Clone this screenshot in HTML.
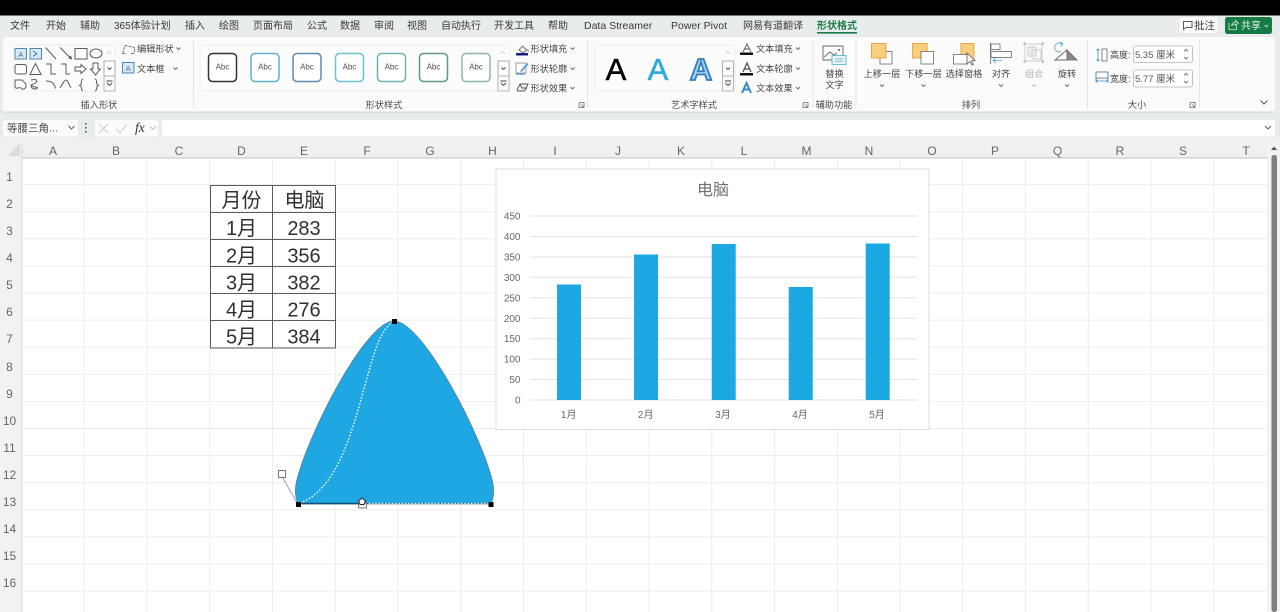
<!DOCTYPE html>
<html lang="zh-CN"><head><meta charset="utf-8"><title>Excel</title>
<style>
html,body{margin:0;padding:0;width:1280px;height:612px;overflow:hidden;background:#fff}
svg{display:block;filter:blur(.35px)}
text{font-family:"Liberation Sans","Noto Sans CJK SC",sans-serif}
.t{font-size:10px;fill:#3a3a3a}
.r{font-size:9.2px;fill:#444}
.c{text-anchor:middle}
.g{font-size:9.2px;fill:#4a4a4a;text-anchor:middle}
.h{font-size:12px;fill:#666;text-anchor:middle}
.n{font-size:12px;fill:#666;text-anchor:middle}
.s{fill:none;stroke:#5a5a5a;stroke-width:1}
.ab{font-size:8px;fill:#5a4a50;text-anchor:middle}
.ax{font-size:10px;fill:#666;text-anchor:end}
.m{font-size:10px;fill:#666;text-anchor:middle}
.tb{font-size:20px;fill:#303030;text-anchor:middle}
.box{fill:#fff;stroke-width:1.5}
.ch{fill:none;stroke:#666;stroke-width:.9}
</style></head><body>
<svg width="1280" height="612" viewBox="0 0 1280 612" xmlns="http://www.w3.org/2000/svg">
<defs>
<pattern id="grid" x="22" y="158" width="62.75" height="27.1" patternUnits="userSpaceOnUse">
<path d="M62.25 0V27.1M0 26.6H62.75" fill="none" stroke="#ededed" stroke-width="1"/>
</pattern>
</defs>
<rect width="1280" height="612" fill="#fff"/>
<rect x="0" y="15" width="1280" height="123" fill="#e9ecec"/>

<!-- tabs -->
<g class="t">
<text x="10" y="29" class="t">文件</text><text x="46" y="29" class="t">开始</text><text x="80" y="29" class="t">辅助</text>
<text x="114" y="29" class="t">365体验计划</text><text x="185" y="29" class="t">插入</text><text x="219" y="29" class="t">绘图</text>
<text x="253" y="29" class="t">页面布局</text><text x="307" y="29" class="t">公式</text><text x="340" y="29" class="t">数据</text>
<text x="374" y="29" class="t">审阅</text><text x="407" y="29" class="t">视图</text><text x="441" y="29" class="t">自动执行</text>
<text x="494" y="29" class="t">开发工具</text><text x="548" y="29" class="t">帮助</text>
<text x="584" y="29" class="t" style="font-size:10.5px">Data Streamer</text><text x="671" y="29" class="t" style="font-size:10.5px">Power Pivot</text>
<text x="743" y="29" class="t">网易有道翻译</text>
<text x="817" y="29" class="t" style="fill:#1a7a45;font-weight:700">形状格式</text>
</g>
<rect x="817" y="32" width="40" height="1.6" fill="#1a7a45"/>

<!-- comment/share -->
<rect x="1179" y="17" width="39" height="16.500" rx="2.500" fill="#fbfbfb" stroke="#dcdcdc" stroke-width=".6"/>
<path d="M1183.500 21.500h8.500v6h-6l-2.500 2z" class="s"/>
<text x="1194" y="29" style="font-size:10.500px;fill:#3a3a3a">批注</text>
<rect x="1225" y="17" width="47" height="17" rx="2.500" fill="#157a43"/>
<path d="M1229 23v6.500h7.500v-3.500M1231.500 26c.5-3 2.500-4 4.500-4l-.5-1.500 3 2.500-3 2.500.3-1.500c-1.500 0-3 .5-3.800 2" fill="none" stroke="#cfe8da" stroke-width=".8"/>
<text x="1241" y="29" style="font-size:10px;fill:#e8f5ee">共享</text>
<path d="M1264.500 25l1.800 1.800 1.800-1.800" fill="none" stroke="#e8f5ee" stroke-width=".8"/>

<!-- ribbon -->
<rect x="3" y="37" width="1272" height="75" rx="4" fill="#fbfbfb"/>
<rect x="3" y="111.500" width="1272" height="1.500" fill="#dcdede"/>
<g fill="#e4e6e6">
<rect x="193" y="40" width="1" height="68"/><rect x="587" y="40" width="1" height="68"/><rect x="812.500" y="40" width="1" height="68"/><rect x="855.500" y="40" width="1" height="68"/><rect x="1087" y="40" width="1" height="68"/><rect x="1199" y="40" width="1" height="68"/>
</g>

<!-- shapes gallery -->
<rect x="13" y="45" width="102" height="46" rx="3" fill="#fcfcfc" stroke="#eeeeee"/>
<g class="s">
<rect x="15" y="48.500" width="11.500" height="10.500" fill="#dbe9f5" stroke="#4c86b5"/>
<rect x="30" y="48.500" width="11.500" height="10.500" fill="#dbe9f5" stroke="#4c86b5"/>
<path d="M45.500 47.500l10.500 11.500M60 47.500l11 11"/>
<path d="M69 58l2.500.8-.8-2.500z" fill="#666"/>
<rect x="75" y="48.500" width="12" height="10.500"/>
<ellipse cx="96" cy="53.500" rx="6" ry="4.500"/>
<rect x="15" y="64.500" width="11.500" height="9.500" rx="2"/>
<path d="M30 74.500l5.500-11 5.500 11z"/>
<path d="M46 64h5v10h5M61 64h5v10h4"/>
<path d="M75 67h6v-2.500l5 4.500-5 4.500v-2.500h-6z"/>
<path d="M93 63h5v6h2.500l-5 6-5-6h2.500z"/>
<path d="M15 80h7l4 4v3c-2 3-4 2.500-5 1s-6 2.500-6-2z"/>
<path d="M31 80c4-1 8-.5 4.500 3-3 2-6 1.500-3.500 3s7 1 5 2.500-8-1-5-3.500"/>
<path d="M46 81c4 0 8 1 9.500 7.500"/>
<path d="M60 88c2-3 4-8 6-8s3 5 5 8"/>
<path d="M83 79c-2 0-1.500 4-2 5.500l-1.500 1 1.500 1c.5.500 0 4.500 2 4.500M95 79c2 0 1.500 4 2 5.500l1.500 1-1.500 1c-.5.500 0 4.500-2 4.500"/>
</g>
<text x="20.700" y="56.800" style="font-size:7.500px;fill:#3c6f9a;text-anchor:middle">A</text>
<path d="M33 51l4 2.700-4 2.700" fill="none" stroke="#3c6f9a" stroke-width=".9"/>
<g>
<path d="M106.500 54l2.500-2.500 2.500 2.500" fill="none" stroke="#ccc" stroke-width=".8"/>
<rect x="104" y="61" width="11" height="15" fill="#fff" stroke="#999" stroke-width=".8"/>
<path d="M107.500 67.500l2 2 2-2" fill="none" stroke="#444" stroke-width=".9"/>
<rect x="104" y="76" width="11" height="15" fill="#fafafa" stroke="#aaa" stroke-width=".8"/>
<path d="M106.500 81h6M107 83l2.500 2.500 2.500-2.500" fill="none" stroke="#444" stroke-width=".9"/>
</g>
<path d="M122.500 53.500l2.500-8 8 1.500 2 1.500-1 5M122.500 53.500h3M131 53.500h3" fill="none" stroke="#4d7c9e" stroke-width="1" stroke-dasharray="3 1"/>
<text x="137" y="52" class="r">编辑形状</text>
<path d="M176.500 47.500l2 2 2-2" class="ch"/>
<rect x="122.500" y="62.500" width="11.500" height="10.500" fill="#dbe9f5" stroke="#4c86b5" stroke-width="1"/>
<text x="128.200" y="71" style="font-size:7.500px;fill:#3c6f9a;text-anchor:middle">A</text>
<text x="137" y="72" class="r">文本框</text>
<path d="M173.500 67.500l2 2 2-2" class="ch"/>
<text x="99" y="108" class="g">插入形状</text>

<!-- shape styles -->
<rect x="200" y="45" width="310" height="46" rx="3" fill="#fcfcfc" stroke="#eeeeee"/>
<rect x="208.500" y="53.500" width="28" height="28" rx="4" class="box" stroke="#333"/>
<rect x="251" y="53.500" width="28" height="28" rx="4" class="box" stroke="#62afc6"/>
<rect x="293" y="53.500" width="28" height="28" rx="4" class="box" stroke="#5f8bb0"/>
<rect x="335.500" y="53.500" width="28" height="28" rx="4" class="box" stroke="#6cc1d2"/>
<rect x="377.500" y="53.500" width="28" height="28" rx="4" class="box" stroke="#71b5b0"/>
<rect x="419.500" y="53.500" width="28" height="28" rx="4" class="box" stroke="#5f9a7f"/>
<rect x="462" y="53.500" width="28" height="28" rx="4" class="box" stroke="#8ab8ae"/>
<text x="222.500" y="69.500" class="ab">Abc</text><text x="265" y="69.500" class="ab">Abc</text><text x="307" y="69.500" class="ab">Abc</text>
<text x="349.500" y="69.500" class="ab">Abc</text><text x="391.500" y="69.500" class="ab">Abc</text><text x="433.500" y="69.500" class="ab">Abc</text><text x="476" y="69.500" class="ab">Abc</text>
<path d="M500.500 54l2.500-2.500 2.500 2.500" fill="none" stroke="#ccc" stroke-width=".8"/>
<rect x="498" y="61" width="11" height="15" fill="#fff" stroke="#999" stroke-width=".8"/>
<path d="M501.500 67.500l2 2 2-2" fill="none" stroke="#444" stroke-width=".9"/>
<rect x="498" y="76" width="11" height="15" fill="#fafafa" stroke="#aaa" stroke-width=".8"/>
<path d="M500.500 81h6M501 83l2.500 2.500 2.500-2.500" fill="none" stroke="#444" stroke-width=".9"/>
<!-- fill/outline/effect -->
<path d="M519 50l3.500-4 4 4-3.500 3zM528 49v3" fill="none" stroke="#666" stroke-width=".9"/>
<rect x="516" y="53" width="12" height="2.500" fill="#1c1c8a"/>
<text x="530.500" y="52" class="r">形状填充</text><path d="M570.500 47.500l2 2 2-2" class="ch"/>
<rect x="516" y="63" width="10" height="10" fill="#fff" stroke="#888" stroke-width=".8"/>
<path d="M520 71l7-8 1.500 1.500-7 7.500z" fill="#5a9fd0"/>
<rect x="516" y="73.500" width="9" height="1.300" fill="#5a9fd0"/>
<text x="530.500" y="72" class="r">形状轮廓</text><path d="M570.500 67.500l2 2 2-2" class="ch"/>
<path d="M517 90l3-6h8l-2 5-2 2h-6zM520 84l2 4h4" fill="#eee" stroke="#555" stroke-width=".9"/>
<text x="530.500" y="91.500" class="r">形状效果</text><path d="M570.500 87l2 2 2-2" class="ch"/>
<text x="384" y="108" class="g">形状样式</text>
<path d="M579 102.500h5v5M579 102.500v5h5M581 104.500l3 3" fill="none" stroke="#666" stroke-width=".8"/>

<!-- wordart -->
<rect x="595" y="45" width="140" height="46" rx="3" fill="#fcfcfc" stroke="#eeeeee"/>
<text x="616" y="80" text-anchor="middle" style="font-size:31px;fill:#000;stroke:#000;stroke-width:.5px">A</text>
<text x="658" y="80" text-anchor="middle" style="font-size:31px;fill:#2ea9d8;stroke:#2ea9d8;stroke-width:.5px">A</text>
<text x="701" y="80" text-anchor="middle" style="font-size:31px;fill:#a8d0ea;stroke:#2f7fc0;stroke-width:1.800px;font-weight:700">A</text>
<path d="M725 54l2.500-2.500 2.500 2.500" fill="none" stroke="#ccc" stroke-width=".8"/>
<rect x="722.500" y="61" width="11" height="15" fill="#fff" stroke="#999" stroke-width=".8"/>
<path d="M726 67.500l2 2 2-2" fill="none" stroke="#444" stroke-width=".9"/>
<rect x="722.500" y="76" width="11" height="15" fill="#fafafa" stroke="#aaa" stroke-width=".8"/>
<path d="M725 81h6M725.500 83l2.500 2.500 2.500-2.500" fill="none" stroke="#444" stroke-width=".9"/>
<path d="M743 52l4-8 4 8M744.500 49h5" fill="none" stroke="#555" stroke-width=".9"/>
<rect x="740" y="52.500" width="13" height="2.500" fill="#111"/>
<text x="756" y="52" class="r">文本填充</text><path d="M796 47.500l2 2 2-2" class="ch"/>
<path d="M743 72l4-9 4 9M744.500 69h5" fill="none" stroke="#555" stroke-width="1.300"/>
<rect x="740" y="73" width="13" height="2.500" fill="#111"/>
<text x="756" y="72" class="r">文本轮廓</text><path d="M796 67.500l2 2 2-2" class="ch"/>
<path d="M742 93l4.500-10 4.500 10M743.800 89.500h5.500" fill="none" stroke="#3a88c4" stroke-width="2"/>
<text x="756" y="91.500" class="r">文本效果</text><path d="M796 87l2 2 2-2" class="ch"/>
<text x="694" y="108" class="g">艺术字样式</text>
<path d="M803 102.500h5v5M803 102.500v5h5M805 104.500l3 3" fill="none" stroke="#666" stroke-width=".8"/>

<!-- alt text -->
<path d="M843 57V46h-20v14h11" fill="none" stroke="#666" stroke-width=".9"/>
<path d="M824 57l6-5 4 3 3-2" fill="none" stroke="#666" stroke-width=".9"/>
<circle cx="839" cy="50" r="1" fill="#555"/>
<rect x="832" y="55.500" width="14" height="9" fill="#e8f5f8" stroke="#5fb3c8" stroke-width=".9"/>
<path d="M835 59h8M835 61.500h8" stroke="#5fb3c8" stroke-width=".7"/>
<text x="834.500" y="77" class="r c">替换</text><text x="834.500" y="88" class="r c">文字</text>
<text x="834" y="108" class="g">辅助功能</text>

<!-- arrange -->
<rect x="880" y="51.500" width="12" height="12.500" fill="#fff" stroke="#777" stroke-width=".9"/>
<rect x="871.500" y="43.500" width="14.500" height="14.500" fill="#fbcf7e" stroke="#e0a040" stroke-width=".9"/>
<text x="882" y="77" class="r c">上移一层</text><path d="M880 84.500l2 2 2-2" class="ch"/>
<rect x="912.500" y="43.500" width="14.500" height="14.500" fill="#fbcf7e" stroke="#e0a040" stroke-width=".9"/>
<rect x="921" y="51.500" width="12.500" height="12.500" fill="#fff" stroke="#777" stroke-width=".9"/>
<text x="923.500" y="77" class="r c">下移一层</text><path d="M921.500 84.500l2 2 2-2" class="ch"/>
<rect x="961" y="43.500" width="13" height="16" fill="#fbcf7e" stroke="#e0a040" stroke-width=".9"/>
<rect x="953.500" y="54.500" width="14" height="9.500" fill="#fff" stroke="#777" stroke-width=".9"/>
<path d="M967 53l8 7.500-3.500.3 2 3.500-1.500.7-2-3.500-3 2.500z" fill="#fff" stroke="#555" stroke-width=".8"/>
<text x="964" y="77" class="r c">选择窗格</text>
<path d="M990.500 43v21" stroke="#777" stroke-width=".9"/>
<rect x="991" y="44" width="9" height="5.500" fill="#fff" stroke="#666" stroke-width=".8"/>
<rect x="991" y="51.500" width="20.500" height="6" fill="#fff" stroke="#666" stroke-width=".8"/>
<path d="M1002 60.500h-9m3-2.500l-3 2.500 3 2.500" fill="none" stroke="#5b9fd0" stroke-width=".8"/>
<text x="1001" y="77" class="r c">对齐</text><path d="M999 84.500l2 2 2-2" class="ch"/>
<g fill="none" stroke="#c8c8c8" stroke-width=".9"><rect x="1025" y="44" width="17" height="17"/><rect x="1028" y="47" width="8" height="9" fill="#eee"/><rect x="1032" y="50" width="9" height="9"/></g>
<g fill="#aaa"><rect x="1023.500" y="42.500" width="2" height="2"/><rect x="1042" y="42.500" width="2" height="2"/><rect x="1023.500" y="60.500" width="2" height="2"/><rect x="1042" y="60.500" width="2" height="2"/></g>
<text x="1034" y="77" class="r c" style="fill:#b4b4b4">组合</text><path d="M1032 84.500l2 2 2-2" fill="none" stroke="#bbb" stroke-width=".9"/>
<path d="M1055 60l12-10v10z" fill="#fff" stroke="#666" stroke-width=".9"/>
<path d="M1067 50l10 10h-10z" fill="#8a8a8a" stroke="#666" stroke-width=".8"/>
<path d="M1062 44a4.500 4.500 0 1 0-1 7.500M1060 42l3 2-2.500 2.500" fill="none" stroke="#5fa9cf" stroke-width=".9"/>
<text x="1067" y="77" class="r c">旋转</text><path d="M1065 84.500l2 2 2-2" class="ch"/>
<text x="971" y="108" class="g">排列</text>

<!-- size -->
<path d="M1098 49v12M1096.500 50.500l1.500-1.500 1.500 1.500M1096.500 59.500l1.500 1.500 1.500-1.500" fill="none" stroke="#3c8fc4" stroke-width=".8"/>
<rect x="1102" y="49" width="5" height="12" fill="#fff" stroke="#666" stroke-width=".8"/>
<text x="1110" y="58" style="font-size:9px;fill:#444">高度:</text>
<rect x="1133.500" y="46" width="59" height="16.500" rx="2" fill="#fff" stroke="#b5b5b5" stroke-width=".8"/>
<text x="1135" y="58" style="font-size:9.500px;fill:#555">5.35 厘米</text>
<path d="M1184 51.500l2-2 2 2M1184 57l2 2 2-2" fill="none" stroke="#555" stroke-width=".8"/>
<rect x="1096" y="72" width="12" height="6" fill="#fff" stroke="#666" stroke-width=".8"/>
<path d="M1096 72v10M1108 72v10M1096 81h12M1097.500 79.500l-1.500 1.500 1.500 1.500M1106.500 79.500l1.500 1.500-1.500 1.500" fill="none" stroke="#3c8fc4" stroke-width=".7"/>
<text x="1110" y="82" style="font-size:9px;fill:#444">宽度:</text>
<rect x="1133.500" y="70" width="59" height="17" rx="2" fill="#fff" stroke="#b5b5b5" stroke-width=".8"/>
<text x="1135" y="82" style="font-size:9.500px;fill:#555">5.77 厘米</text>
<path d="M1184 75.500l2-2 2 2M1184 81l2 2 2-2" fill="none" stroke="#555" stroke-width=".8"/>
<text x="1137" y="108" class="g">大小</text>
<path d="M1190 102.500h5v5M1190 102.500v5h5M1192 104.500l3 3" fill="none" stroke="#666" stroke-width=".8"/>
<path d="M1260.500 100.500l3.500 3.500 3.500-3.500" fill="none" stroke="#555" stroke-width="1"/>

<!-- formula bar -->
<rect x="3" y="120" width="75" height="16.500" rx="2" fill="#fbfbfb"/>
<text x="7" y="131.500" style="font-size:10.500px;fill:#444">等腰三角...</text>
<path d="M68.500 126l3 3 3-3" fill="none" stroke="#555" stroke-width=".9"/>
<g fill="#555"><rect x="85" y="123" width="1.600" height="1.600"/><rect x="85" y="127" width="1.600" height="1.600"/><rect x="85" y="131" width="1.600" height="1.600"/></g>
<rect x="95" y="120" width="63" height="16.500" rx="2" fill="#fbfbfb"/>
<path d="M99 124l9 9M108 124l-9 9M116 129l4 4 7-9" fill="none" stroke="#c9c9c9" stroke-width=".9"/>
<text x="135" y="132" style="font-family:'Liberation Serif',serif;font-style:italic;font-size:13.500px;fill:#333">fx</text>
<path d="M150 126.500l3 3 3-3" fill="none" stroke="#bbb" stroke-width=".9"/>
<rect x="162" y="120" width="1113" height="16.500" rx="2" fill="#fff"/>
<path d="M1265 126l3 3 3-3" fill="none" stroke="#555" stroke-width=".9"/>

<!-- headers -->
<rect x="0" y="138" width="1280" height="20" fill="#eff0f0"/>
<rect x="0" y="158" width="22" height="454" fill="#f1f2f2"/>
<rect x="22" y="157.500" width="1245" height="1" fill="#c4c4c4"/>
<rect x="21.500" y="144" width="1" height="468" fill="#dadada"/>
<path d="M8 156l12-13v13z" fill="#dcdcdc"/>
<g class="h">
<text x="53" y="155" class="h">A</text><text x="116" y="155" class="h">B</text><text x="179" y="155" class="h">C</text><text x="241.500" y="155" class="h">D</text><text x="304" y="155" class="h">E</text><text x="367" y="155" class="h">F</text><text x="430" y="155" class="h">G</text><text x="492.500" y="155" class="h">H</text><text x="555" y="155" class="h">I</text><text x="618" y="155" class="h">J</text><text x="681" y="155" class="h">K</text><text x="744" y="155" class="h">L</text><text x="806.500" y="155" class="h">M</text><text x="869" y="155" class="h">N</text><text x="932" y="155" class="h">O</text><text x="995" y="155" class="h">P</text><text x="1057.500" y="155" class="h">Q</text><text x="1120" y="155" class="h">R</text><text x="1183" y="155" class="h">S</text><text x="1246" y="155" class="h">T</text>
</g>
<g>
<text x="9.500" y="181" class="n">1</text><text x="9.500" y="208" class="n">2</text><text x="9.500" y="235" class="n">3</text><text x="9.500" y="262" class="n">4</text><text x="9.500" y="289" class="n">5</text><text x="9.500" y="316" class="n">6</text><text x="9.500" y="343" class="n">7</text><text x="9.500" y="371" class="n">8</text><text x="9.500" y="398" class="n">9</text><text x="9.500" y="425" class="n">10</text><text x="9.500" y="452" class="n">11</text><text x="9.500" y="479" class="n">12</text><text x="9.500" y="506" class="n">13</text><text x="9.500" y="533" class="n">14</text><text x="9.500" y="560" class="n">15</text><text x="9.500" y="587" class="n">16</text>
</g>

<!-- grid -->
<rect x="22" y="158" width="1245" height="454" fill="url(#grid)"/>

<!-- scrollbar -->
<rect x="1267" y="138" width="13" height="474" fill="#f1f2f2"/>
<path d="M1271 150l3-3.500 3 3.500z" fill="#555"/>
<rect x="1271.500" y="155" width="5.500" height="457" rx="2.500" fill="#7e7e7e"/>

<!-- table -->
<g fill="none" stroke="#5c5c5c" stroke-width="1">
<path d="M210 185.500H336M210 212.500H336M210 239.500H336M210 266.500H336M210 293.500H336M210 320.500H336M210 348H336M210.500 185V348.500M272.500 185V348.500M335.500 185V348.500"/>
</g>
<text x="241.500" y="207" class="tb">月份</text><text x="304.500" y="207" class="tb">电脑</text>
<text x="241.500" y="235" class="tb">1月</text><text x="304" y="235" class="tb">283</text>
<text x="241.500" y="262.500" class="tb">2月</text><text x="304" y="262.500" class="tb">356</text>
<text x="241.500" y="289.500" class="tb">3月</text><text x="304" y="289.500" class="tb">382</text>
<text x="241.500" y="316.500" class="tb">4月</text><text x="304" y="316.500" class="tb">276</text>
<text x="241.500" y="343.500" class="tb">5月</text><text x="304" y="343.500" class="tb">384</text>

<!-- chart -->
<rect x="496" y="169" width="433" height="260.500" fill="#fff" stroke="#dedede"/>
<text x="713" y="195" text-anchor="middle" style="font-size:16px;fill:#707070">电脑</text>
<g stroke="#e2e2e2" stroke-width="1">
<path d="M530 216H917M530 236.500H917M530 257H917M530 277.300H917M530 297.800H917M530 318.200H917M530 338.700H917M530 359.100H917M530 379.500H917M530 400H917"/>
</g>
<g>
<text x="520.500" y="219.500" class="ax">450</text><text x="520.500" y="240" class="ax">400</text><text x="520.500" y="260.500" class="ax">350</text><text x="520.500" y="281" class="ax">300</text><text x="520.500" y="301.500" class="ax">250</text><text x="520.500" y="322" class="ax">200</text><text x="520.500" y="342" class="ax">150</text><text x="520.500" y="362.500" class="ax">100</text><text x="520.500" y="383" class="ax">50</text><text x="520.500" y="403.500" class="ax">0</text>
</g>
<g fill="#1ca9e3">
<rect x="557" y="284.500" width="24" height="115.500"/>
<rect x="634" y="254.500" width="24" height="145.500"/>
<rect x="711.700" y="244" width="24" height="156"/>
<rect x="788.700" y="287" width="24" height="113"/>
<rect x="865.700" y="243.500" width="24" height="156.500"/>
</g>
<text x="568.700" y="418" class="m">1月</text><text x="645.700" y="418" class="m">2月</text><text x="723" y="418" class="m">3月</text><text x="800" y="418" class="m">4月</text><text x="877" y="418" class="m">5月</text>

<!-- shape -->
<path d="M298 504C295 497 295 490 296 484C305 440 365 321 394 321C423 321 484 440 493 484C494 490 494 497 491 504Z" fill="#1ea7e2" stroke="#5a7d98" stroke-width=".8"/>
<path d="M298 503.500H362" stroke="#14507f" stroke-width="1.400"/>
<path d="M362 503.500H491" stroke="#3f6f92" stroke-width="1"/>
<path d="M362 503.500H491" stroke="#e4f3fa" stroke-width="1.300" stroke-dasharray="1.500 1.800"/>
<path d="M300 503C335 490 350 440 365 385C375 350 380 330 394 321" fill="none" stroke="#e4f3fa" stroke-width="1.600" stroke-dasharray="1.500 1.800"/>
<path d="M283 478L297 503" stroke="#7d9aae" stroke-width=".8"/>
<rect x="278.500" y="470.500" width="7" height="7" fill="#fff" stroke="#666" stroke-width=".9"/>
<rect x="296" y="502" width="5" height="5" fill="#000"/><rect x="392" y="319" width="5" height="5" fill="#000"/><rect x="488.500" y="502" width="5" height="5" fill="#000"/>
<rect x="358.500" y="503" width="8" height="5" fill="#eee" stroke="#555" stroke-width=".7"/>
<path d="M362 498l3.500 3-1.500 3.500h-4l-1.500-3.500z" fill="#fff" stroke="#222" stroke-width="1"/>
<rect width="1280" height="15.500" fill="#000"/>
</svg>
</body></html>
